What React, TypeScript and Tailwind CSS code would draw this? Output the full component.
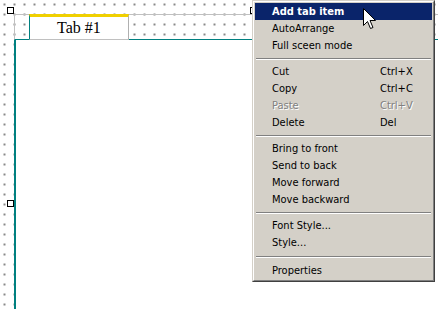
const menuFont = { fontFamily: '"DejaVu Sans Condensed", "DejaVu Sans", sans-serif' }

type Item =
  | { kind: "item"; label: string; shortcut?: string; active?: boolean; disabled?: boolean }
  | { kind: "sep"; tall?: boolean }

const items: Item[] = [
  { kind: "item", label: "Add tab item", active: true },
  { kind: "item", label: "AutoArrange" },
  { kind: "item", label: "Full sceen mode" },
  { kind: "sep" },
  { kind: "item", label: "Cut", shortcut: "Ctrl+X" },
  { kind: "item", label: "Copy", shortcut: "Ctrl+C" },
  { kind: "item", label: "Paste", shortcut: "Ctrl+V", disabled: true },
  { kind: "item", label: "Delete", shortcut: "Del" },
  { kind: "sep" },
  { kind: "item", label: "Bring to front" },
  { kind: "item", label: "Send to back" },
  { kind: "item", label: "Move forward" },
  { kind: "item", label: "Move backward" },
  { kind: "sep" },
  { kind: "item", label: "Font Style..." },
  { kind: "item", label: "Style..." },
  { kind: "sep", tall: true },
  { kind: "item", label: "Properties" },
]

function Handle({ className }: { className: string }) {
  return <div className={`absolute w-[7px] h-[7px] border border-black bg-white ${className}`} />
}

function ContextMenu() {
  return (
    <div
      className="absolute left-[252px] top-0 w-[183px] border border-t-[#d4d0c8] border-l-[#d4d0c8] border-r-[#404040] border-b-[#404040] bg-[#d4d0c8]"
      style={menuFont}
    >
      <div className="border border-t-white border-l-white border-r-[#808080] border-b-[#808080] pt-px px-px pb-px">
        {items.map((it, i) => {
          if (it.kind === "sep") {
            return (
              <div key={i} className={`${it.tall ? "h-[11px] pt-[5px]" : "h-[9px] pt-[4px]"} px-[1px]`}>
                <div className="border-t border-[#808080] border-b border-b-white" />
              </div>
            )
          }
          const color = it.active
            ? "bg-[#0a246a] text-white font-bold"
            : it.disabled
              ? "text-[#808080] [text-shadow:1px_1px_0_#fff]"
              : "text-black"
          return (
            <div key={i} className={`flex items-center h-[17px] pl-[17px] text-[11px] leading-none ${color}`}>
              <span className="w-[108px] whitespace-nowrap">{it.label}</span>
              {it.shortcut && <span className="whitespace-nowrap">{it.shortcut}</span>}
            </div>
          )
        })}
      </div>
    </div>
  )
}

function Cursor() {
  return (
    <svg className="absolute left-[363px] top-[8px]" width="14" height="22" viewBox="0 0 14 22">
      <path
        d="M0.5 0.5 L0.5 17.5 L4.5 13.5 L7.5 20.5 L10 19.5 L7 12.5 L12.5 12.5 Z"
        fill="white"
        stroke="black"
        strokeWidth="1"
      />
    </svg>
  )
}

export default function App() {
  return (
    <div className="relative w-[438px] h-[309px] overflow-hidden bg-white [background-image:radial-gradient(circle,#000_0.6px,transparent_0.8px)] [background-size:10px_10px] [background-position:-0.5px_-0.5px]">
      {/* Tab control being designed */}
      <div className="flex flex-col h-full pt-[14px] pl-[14px]">
        <div className="flex h-[26px]">
          <div className="w-[15px] border-t border-l border-t-[#c0c0c0] border-l-[#c0c0c0] border-b border-b-[#008080]" />
          <div
            className="w-[100px] flex items-center justify-center bg-white border-t-[3px] border-t-[#f0d000] border-l border-l-[#008080] border-r border-r-[#b0b0b0] border-b border-b-[#c0c0c0] text-[16px] text-black"
            style={{ fontFamily: '"Liberation Serif", serif' }}
          >
            Tab #1
          </div>
          <div className="flex-1 border-t border-t-[#c0c0c0] border-b border-b-[#008080]" />
        </div>
        <div className="flex-1 bg-white border-l-2 border-[#008080]" />
      </div>

      <Handle className="left-[7px] top-[7px]" />
      <Handle className="left-[250px] top-[7px]" />
      <Handle className="left-[7px] top-[200px]" />

      <ContextMenu />
      <Cursor />
    </div>
  )
}
